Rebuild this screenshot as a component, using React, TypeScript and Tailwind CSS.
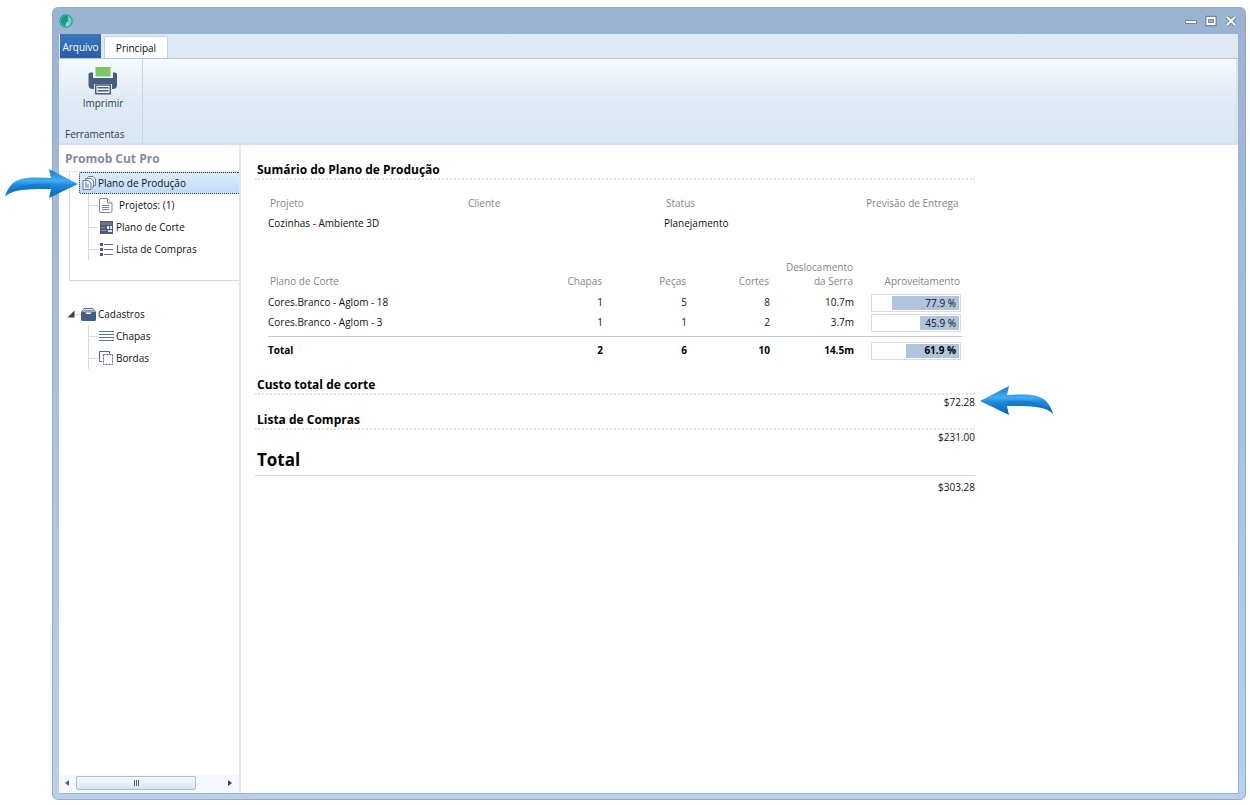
import type { ReactNode } from "react";

interface CutPlanRow {
    name: string;
    sheets: number;
    parts: number;
    cuts: number;
    travel: string;
    usage: number;
}

const cutPlans: CutPlanRow[] = [
    { name: "Cores.Branco - Aglom - 18", sheets: 1, parts: 5, cuts: 8, travel: "10.7m", usage: 77.9 },
    { name: "Cores.Branco - Aglom - 3", sheets: 1, parts: 1, cuts: 2, travel: "3.7m", usage: 45.9 },
];

const projectInfo = [
    { label: "Projeto", value: "Cozinhas - Ambiente 3D" },
    { label: "Cliente", value: "" },
    { label: "Status", value: "Planejamento" },
    { label: "Previsão de Entrega", value: "" },
];

function AppLogo() {
    return (
        <svg width="14" height="14" viewBox="0 0 14 14" aria-hidden="true">
            <circle cx="7" cy="7" r="6.2" fill="#a3cfd2" stroke="#1ba58f" strokeWidth="1.2" />
            <path d="M8 1.5 5 1.500 2 4.500l-.3 4L4 11.500l2.500 1 .3-3 1-1.500L10 7 8.600 5.500 9.800 3.500z" fill="#12a084" />
            <path d="M10 3 11.500 5.500 11.500 8l-1.500 2.500" fill="none" stroke="#6fc0b8" />
        </svg>
    );
}

function PrinterIcon() {
    return (
        <svg width="30" height="28" viewBox="0 0 30 28" aria-hidden="true">
            <path d="M7.500 0h15v9.500h-15z" fill="#7cc663" />
            <path d="M0.500 7.500a2 2 0 0 1 2-2H5V11h20V5.500h2a2 2 0 0 1 2 2V18a4 4 0 0 1-4 4h-1v-5H6v5H4.500a4 4 0 0 1-4-4z" fill="#475e80" />
            <path d="M7.700 18h14.600v8.700H7.700z" fill="#f4f8fd" stroke="#475e80" strokeWidth="1.500" />
            <path d="M9.500 20.800h11M9.500 23.800h11" stroke="#475e80" strokeWidth="1.400" />
        </svg>
    );
}

function PlanIcon() {
    return (
        <svg width="15" height="15" viewBox="0 0 15 15" fill="#eaf2fc" stroke="#6b7f9b" aria-hidden="true">
            <path d="M5.500 3V1.500l1-1h4.500l2.500 2.500v6.500H12" />
            <path d="M3.500 4.500V2.500h5.500l2.500 2.500v6H10" />
            <path d="M1 4.500h5.500L9 7v6.500H1z" />
            <path d="M3 9h4M3 11h4M3 7h2" />
        </svg>
    );
}

function ProjectIcon() {
    return (
        <svg width="14" height="15" viewBox="0 0 14 15" fill="#fff" stroke="#7486a1" aria-hidden="true">
            <path d="M2 .5h6.500l4.500 4.500v8a1.500 1.500 0 0 1-1.500 1.500H2A1.500 1.500 0 0 1 .5 13V2A1.500 1.500 0 0 1 2 .5z" />
            <path d="M8.500.5V5H13" />
            <path d="M3 7.500h7M3 9.500h7M3 11.500h7" />
        </svg>
    );
}

function CutIcon() {
    return (
        <svg width="13" height="13" viewBox="0 0 13 13" aria-hidden="true">
            <path d="M0 0h13v13H0z" fill="#4e5c72" />
            <path d="M1 1h11v3H1z" fill="#667790" />
            <path d="M1 6h4v1H1zM1 9h5v1H1z" fill="#8493a9" />
            <path d="M7 5h5v3H7zM8 9h4v2H8z" fill="#dbe3ee" />
            <path d="M9 5h1v3H9z" fill="#5d6c83" />
        </svg>
    );
}

function ListIcon() {
    return (
        <svg width="13" height="13" viewBox="0 0 13 13" aria-hidden="true">
            <path d="M0 0h3v3H0zM0 5h3v3H0zM0 10h3v3H0z" fill="#4a5c78" />
            <path d="M4 1.500h9M4 6.500h9M4 11.500h9" stroke="#5d6f8b" />
        </svg>
    );
}

function DrawerIcon() {
    return (
        <svg width="15" height="13" viewBox="0 0 15 13" aria-hidden="true">
            <path d="M3 .5h9L14.500 4H.5z" fill="#dde5ef" stroke="#5b7090" />
            <path d="M0 4h4l1.500 2h4L11 4h4v7.500a1.500 1.500 0 0 1-1.500 1.500h-12A1.500 1.500 0 0 1 0 11.500z" fill="#445d84" />
            <path d="M3 2.500h9" stroke="#8195b1" />
        </svg>
    );
}

function SheetsIcon() {
    return (
        <svg width="15" height="11" viewBox="0 0 15 11" stroke="#5a7391" aria-hidden="true">
            <path d="M0 .5h15M0 3.500h15M0 6.500h15M0 9.500h15" />
        </svg>
    );
}

function EdgesIcon() {
    return (
        <svg width="15" height="14" viewBox="0 0 15 14" fill="none" stroke="#4f6789" aria-hidden="true">
            <path d="M3 10.500H.5v-10h10V3" />
            <path d="M4.500 3.500h9v10h-9z" strokeDasharray="2 1" />
        </svg>
    );
}

function PointerArrow({ id, className }: { id: string; className: string }) {
    return (
        <svg width="74" height="30" viewBox="0 0 74 30" className={className} aria-hidden="true">
            <defs>
                <linearGradient id={id} x1="0" y1="0" x2="0" y2="1">
                    <stop offset="0.1" stopColor="#1f83d6" />
                    <stop offset="0.4" stopColor="#46abf0" />
                    <stop offset="0.55" stopColor="#1e8bdf" />
                    <stop offset="1" stopColor="#0b62ab" />
                </linearGradient>
            </defs>
            <path d="M0 15 29 0 27 9C46 8 59 8 66 15 70 19 72 24 73 28 66 20 53 20 27 20L29 29z" fill={`url(#${id})`} />
            <path d="M28 15c18-1 33 0 44 12-9-7-22-7-44-7z" fill="#0a68b8" opacity="0.35" />
        </svg>
    );
}

function TreeItem({ icon, label, wide }: { icon: ReactNode; label: string; wide?: boolean }) {
    return (
        <li className="flex h-[22px] items-center">
            <span className="w-[9px] border-t border-[#dadada]" />
            <button type="button" className={`flex items-center ${wide ? "gap-[5px]" : "gap-0.5"}`}>
                <span className="flex w-4 justify-center">{icon}</span>
                {label}
            </button>
        </li>
    );
}

function UsageBar({ value }: { value: number }) {
    return (
        <div className="ml-auto flex h-[18px] w-[90px] justify-end border border-[#dcdcdc] bg-white p-px">
            <div className="flex items-center justify-end bg-[#b0c4de] pr-[3px]" style={{ width: `${value}%` }}>
                <span className="whitespace-nowrap">{value} %</span>
            </div>
        </div>
    );
}

function Sidebar() {
    return (
        <aside className="flex w-[182px] shrink-0 flex-col border-r-2 border-[#dce8f5] bg-white">
            <h2 className="h-[27px] border-b border-[#dfeaf7] pl-1.5 text-[12px] leading-[27px] font-bold text-[#858c95]">Promob Cut Pro</h2>
            <nav aria-label="Promob Cut Pro" className="flex-1">
                <div className="ml-[10px] border-l border-[#dadada]">
                    <div className="relative ml-[9px]">
                        <button
                            type="button"
                            aria-current="page"
                            className="flex h-[22px] w-full items-center gap-px rounded-l-xs border border-r-0 border-dotted border-[#333] bg-linear-to-b from-[#dcebfd] to-[#c1dbfc] pl-0.5"
                        >
                            <PlanIcon />
                            Plano de Produção
                        </button>
                        <PointerArrow id="arrow-plan" className="absolute top-[-3px] right-full mr-px -scale-x-100" />
                    </div>
                    <ul className="ml-[18px] border-l border-[#dadada]">
                        <TreeItem icon={<ProjectIcon />} label="Projetos: (1)" wide />
                        <TreeItem icon={<CutIcon />} label="Plano de Corte" />
                        <TreeItem icon={<ListIcon />} label="Lista de Compras" />
                    </ul>
                    <hr className="mt-5 mb-[22px] border-[#dadada]" />
                </div>
                <button type="button" aria-expanded="true" className="flex h-[22px] items-center pl-2">
                    <svg width="8" height="8" viewBox="0 0 8 8" aria-hidden="true">
                        <path d="M7.500.5v7h-7z" fill="#404040" />
                    </svg>
                    <span className="w-1.5 border-t border-[#dadada]" />
                    <DrawerIcon />
                    <span className="pl-0.5">Cadastros</span>
                </button>
                <ul className="ml-[29px] border-l border-[#dadada]">
                    <TreeItem icon={<SheetsIcon />} label="Chapas" />
                    <TreeItem icon={<EdgesIcon />} label="Bordas" />
                </ul>
            </nav>
            <div className="flex h-[18px] items-center bg-[#f5f9fe] pr-1 pb-0.5 pl-1">
                <button type="button" aria-label="Rolar para a esquerda" className="flex w-[13px] pl-0.5">
                    <svg width="4" height="6" viewBox="0 0 4 6"><path d="M4 0v6L0 3z" fill="#4c607a" /></svg>
                </button>
                <div className="flex h-[14px] w-[120px] items-center justify-center gap-px rounded-xs border border-[#a9bfd6] bg-linear-to-b from-[#f7fbff] to-[#d8e4f2]">
                    <span className="h-1.5 w-px bg-[#4c607a]" />
                    <span className="h-1.5 w-px bg-[#4c607a]" />
                    <span className="h-1.5 w-px bg-[#4c607a]" />
                </div>
                <button type="button" aria-label="Rolar para a direita" className="ml-auto flex w-[10px] justify-center">
                    <svg width="4" height="6" viewBox="0 0 4 6"><path d="M0 0v6l4-3z" fill="#32465f" /></svg>
                </button>
            </div>
        </aside>
    );
}

function SectionTitle({ children }: { children: ReactNode }) {
    return (
        <h2 className="h-[18px] border-b-2 border-dotted border-[#e2e2e2] pl-0.5 text-[12px] leading-4 font-bold text-black">
            {children}
        </h2>
    );
}

function Amount({ children }: { children: ReactNode }) {
    return <p className="h-[17px] text-right leading-[14px]">{children}</p>;
}

function Summary() {
    return (
        <main className="flex-1 bg-white pt-[17px] pl-[14px]">
            <div className="max-w-[720px]">
                <SectionTitle>Sumário do Plano de Produção</SectionTitle>

                <dl className="mt-[13px] ml-[13px] grid grid-cols-[198px_198px_200px_auto]">
                    {projectInfo.map((item) => (
                        <div key={item.label}>
                            <dt className="h-5 pl-0.5 leading-5 text-[#858585]">{item.label}</dt>
                            <dd className="h-5 leading-5">{item.value}</dd>
                        </div>
                    ))}
                </dl>

                <div className="mt-[25px] pr-[13px] pl-[13px]">
                    <table className="w-full table-fixed text-right">
                        <colgroup>
                            <col />
                            <col className="w-[85px]" />
                            <col className="w-[84px]" />
                            <col className="w-[83px]" />
                            <col className="w-[84px]" />
                            <col className="w-[107px]" />
                        </colgroup>
                        <thead>
                            <tr className="h-[34px] align-bottom leading-[14px] text-[#858585] [&>th]:pr-0.5 [&>th]:pb-1 [&>th]:font-normal">
                                <th scope="col" className="pl-0.5 text-left">Plano de Corte</th>
                                <th scope="col">Chapas</th>
                                <th scope="col">Peças</th>
                                <th scope="col">Cortes</th>
                                <th scope="col">Deslocamento<br />da Serra</th>
                                <th scope="col">Aproveitamento</th>
                            </tr>
                        </thead>
                        <tbody>
                            {cutPlans.map((row) => (
                                <tr key={row.name} className="h-5 leading-4 last:[&>*]:pb-1 [&>td]:pr-px">
                                    <th scope="row" className="text-left font-normal">{row.name}</th>
                                    <td>{row.sheets}</td>
                                    <td>{row.parts}</td>
                                    <td>{row.cuts}</td>
                                    <td>{row.travel}</td>
                                    <td className="pt-0.5"><UsageBar value={row.usage} /></td>
                                </tr>
                            ))}
                        </tbody>
                        <tfoot>
                            <tr className="h-7 border-t border-[#c8c8c8] font-bold text-black [&>td]:pr-px">
                                <th scope="row" className="text-left">Total</th>
                                <td>2</td>
                                <td>6</td>
                                <td>10</td>
                                <td>14.5m</td>
                                <td><UsageBar value={61.9} /></td>
                            </tr>
                        </tfoot>
                    </table>
                </div>

                <div className="relative mt-3">
                    <SectionTitle>Custo total de corte</SectionTitle>
                    <Amount>$72.28</Amount>
                    <PointerArrow id="arrow-cost" className="absolute top-[9px] left-full ml-[5px]" />
                </div>
                <SectionTitle>Lista de Compras</SectionTitle>
                <Amount>$231.00</Amount>
                <h2 className="h-[29px] border-b border-[#d9d9d9] pl-0.5 text-[17px] leading-[26px] font-bold text-black">Total</h2>
                <div className="pt-1">
                    <Amount>$303.28</Amount>
                </div>
            </div>
        </main>
    );
}

export default function App() {
    return (
        <div className="flex min-h-screen flex-col bg-white pt-[7px] pr-1 pb-[5px] pl-[52px] font-['Open_Sans','Noto_Sans',sans-serif] text-[10px] text-[#111]">
            <div className="flex flex-1 flex-col rounded-md border border-[#93abc8] bg-linear-to-b from-[#9ab3d1] to-[#b9d0ec] px-1.5 pb-[5px]">
                <header className="flex h-[26px] items-center justify-between pr-0.5">
                    <AppLogo />
                    <div className="flex gap-2">
                        <button type="button" aria-label="Minimizar">
                            <svg width="12" height="12" viewBox="0 0 12 12"><path d="M.5 5.500h11v3H.5z" fill="#fff" stroke="#74849a" /></svg>
                        </button>
                        <button type="button" aria-label="Maximizar">
                            <svg width="12" height="12" viewBox="0 0 12 12" fill="none">
                                <path d="M1 1.500h10v9H1z" stroke="#74849a" strokeWidth="1.500" />
                                <path d="M2.500 3h7v6h-7z" stroke="#fff" strokeWidth="2" />
                                <path d="M3.500 4.500h5v3h-5z" stroke="#74849a" />
                            </svg>
                        </button>
                        <button type="button" aria-label="Fechar">
                            <svg width="12" height="12" viewBox="0 0 12 12" fill="none">
                                <path d="M2 2l8 8M10 2l-8 8" stroke="#74849a" strokeWidth="4" />
                                <path d="M2 2l8 8M10 2l-8 8" stroke="#fff" strokeWidth="2" />
                            </svg>
                        </button>
                    </div>
                </header>

                <div className="flex flex-1 flex-col border border-t-0 border-l-0 border-[#9db4d0] bg-[#dfe9f5]">
                    <div className="flex h-[25px] items-end gap-[3px] border-b border-[#b5c8df] pl-px">
                        <button type="button" className="h-6 w-[41px] bg-linear-to-b from-[#3b78bd] to-[#2a5da6] pt-0.5 text-white">Arquivo</button>
                        <button type="button" className="h-[22px] w-16 rounded-t-xs border border-b-0 border-[#c5d4e6] bg-white pt-px">Principal</button>
                    </div>
                    <div className="mr-px flex h-[86px] border-r border-b-2 border-[#d3dfed] bg-linear-to-b from-[#f6fbff] via-[#e0e9f6] to-[#dbe7f4] text-[#2b3d54]">
                        <section className="flex w-[84px] flex-col justify-between border-r border-[#c6d5e6] pt-2">
                            <button type="button" className="ml-[9px] flex w-[70px] flex-col items-center leading-4">
                                <PrinterIcon />
                                Imprimir
                            </button>
                            <h2 className="pb-px pl-1.5 leading-4">Ferramentas</h2>
                        </section>
                    </div>
                    <div className="flex flex-1">
                        <Sidebar />
                        <Summary />
                    </div>
                </div>
            </div>
        </div>
    );
}
